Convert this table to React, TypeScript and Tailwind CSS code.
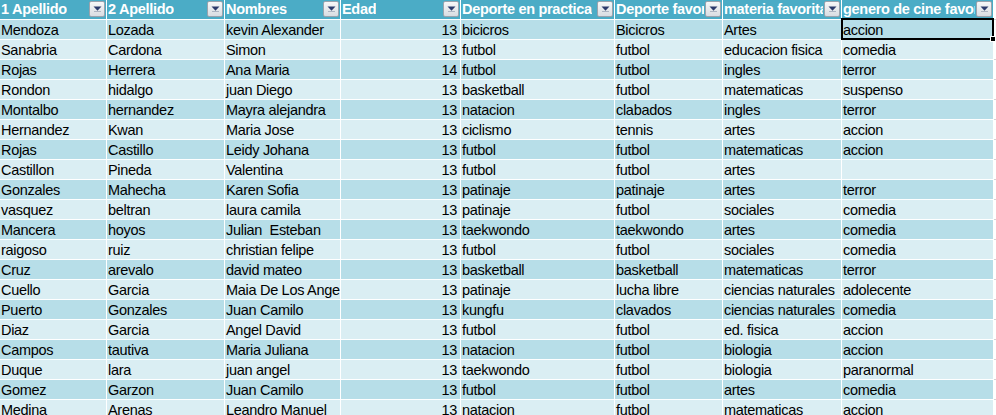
import React from "react";

type Col = { title: string; width: string; right?: boolean };

const cols: Col[] = [
  { title: "1 Apellido", width: "w-[107px]" },
  { title: "2 Apellido", width: "w-[118px]" },
  { title: "Nombres", width: "w-[116px]" },
  { title: "Edad", width: "w-[120px]", right: true },
  { title: "Deporte en practica", width: "w-[154px]" },
  { title: "Deporte favorito", width: "w-[108px]" },
  { title: "materia favorita", width: "w-[119px]" },
  { title: "genero de cine favorito", width: "w-[152px]" },
];

const rows: string[][] = [
  ["Mendoza", "Lozada", "kevin Alexander", "13", "bicicros", "Bicicros", "Artes", "accion"],
  ["Sanabria", "Cardona", "Simon", "13", "futbol", "futbol", "educacion fisica", "comedia"],
  ["Rojas", "Herrera", "Ana Maria", "14", "futbol", "futbol", "ingles", "terror"],
  ["Rondon", "hidalgo", "juan Diego", "13", "basketball", "futbol", "matematicas", "suspenso"],
  ["Montalbo", "hernandez", "Mayra alejandra", "13", "natacion", "clabados", "ingles", "terror"],
  ["Hernandez", "Kwan", "Maria Jose", "13", "ciclismo", "tennis", "artes", "accion"],
  ["Rojas", "Castillo", "Leidy Johana", "13", "futbol", "futbol", "matematicas", "accion"],
  ["Castillon", "Pineda", "Valentina", "13", "futbol", "futbol", "artes", ""],
  ["Gonzales", "Mahecha", "Karen Sofia", "13", "patinaje", "patinaje", "artes", "terror"],
  ["vasquez", "beltran", "laura camila", "13", "patinaje", "futbol", "sociales", "comedia"],
  ["Mancera", "hoyos", "Julian  Esteban", "13", "taekwondo", "taekwondo", "artes", "comedia"],
  ["raigoso", "ruiz", "christian felipe", "13", "futbol", "futbol", "sociales", "comedia"],
  ["Cruz", "arevalo", "david mateo", "13", "basketball", "basketball", "matematicas", "terror"],
  ["Cuello", "Garcia", "Maia De Los Angeles", "13", "patinaje", "lucha libre", "ciencias naturales", "adolecente"],
  ["Puerto", "Gonzales", "Juan Camilo", "13", "kungfu", "clavados", "ciencias naturales", "comedia"],
  ["Diaz", "Garcia", "Angel David", "13", "futbol", "futbol", "ed. fisica", "accion"],
  ["Campos", "tautiva", "Maria Juliana", "13", "natacion", "futbol", "biologia", "accion"],
  ["Duque", "lara", "juan angel", "13", "taekwondo", "futbol", "biologia", "paranormal"],
  ["Gomez", "Garzon", "Juan Camilo", "13", "futbol", "futbol", "artes", "comedia"],
  ["Medina", "Arenas", "Leandro Manuel", "13", "natacion", "futbol", "matematicas", "accion"],
];

function FilterButton() {
  return (
    <div className="absolute right-[1px] top-[1px] flex h-[16px] w-[16px] items-center justify-center rounded-[2px] border border-[#9aa3ad] bg-gradient-to-b from-[#f7f7f7] to-[#d9dde2]">
      <svg width="9" height="6" viewBox="0 0 9 6">
        <path d="M0.5 0.5 L8.5 0.5 L4.5 4.8 Z" fill="#2b3a6b" />
        <path d="M1 5.5 L8 5.5" stroke="#8a93a8" strokeWidth="0.6" />
      </svg>
    </div>
  );
}

export default function App() {
  return (
    <div className="h-[415px] w-[996px] overflow-hidden bg-white text-[14.5px] leading-none font-['Liberation_Sans',Arial,sans-serif] tracking-[-0.3px]">
      <div className="relative flex w-[996px]">
        <div className="flex flex-col">
          <div className="flex h-[20px]">
            {cols.map((c, i) => (
              <div
                key={i}
                className={`${c.width} relative flex h-[20px] shrink-0 items-center overflow-hidden whitespace-nowrap border-r border-b border-white bg-[#4bacc6] pl-[1px] pr-[18px] font-bold text-white`}
              >
                <span className="overflow-hidden">{c.title}</span>
                <FilterButton />
              </div>
            ))}
          </div>
          {rows.map((r, ri) => (
            <div key={ri} className="flex h-[20px]">
              {r.map((v, ci) => (
                <div
                  key={ci}
                  className={`${cols[ci].width} flex h-[20px] shrink-0 items-center overflow-hidden whitespace-pre border-r border-b border-white pt-[1px] text-black ${
                    ri % 2 === 0 ? "bg-[#b7dee8]" : "bg-[#daeef3]"
                  } ${cols[ci].right ? "justify-end pr-[3px]" : "pl-[1px]"}`}
                >
                  {v}
                </div>
              ))}
            </div>
          ))}
        </div>
        <div className="flex flex-1 flex-col">
          {Array.from({ length: 21 }).map((_, i) => (
            <div key={i} className="h-[20px] border-b border-[#d4d4d4]" />
          ))}
        </div>
        <div className="pointer-events-none absolute left-[841px] top-[18px] h-[22px] w-[153px] border-2 border-black">
          <div className="absolute -bottom-[4px] -right-[4px] h-[6px] w-[6px] border border-white bg-black" />
        </div>
      </div>
    </div>
  );
}
